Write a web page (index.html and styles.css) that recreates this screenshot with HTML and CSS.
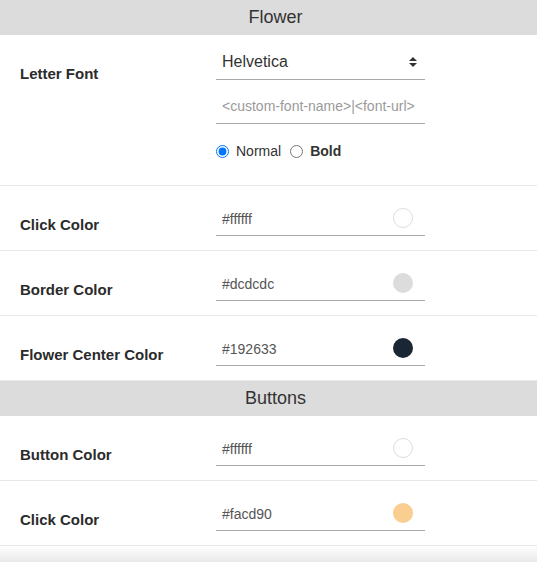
FILE: index.html
```html
<!DOCTYPE html>
<html>
<head>
<meta charset="utf-8">
<link rel="stylesheet" href="styles.css">
</head>
<body>
<div class="panel">
  <div class="section-header">Flower</div>

  <div class="row row-font">
    <div class="label">Letter Font</div>
    <div class="control">
      <div class="select-wrap">
        <select class="select">
          <option>Helvetica</option>
        </select>
        <svg class="select-arrow" width="8" height="10" viewBox="0 0 8 10"><path d="M4 0 L8 4 H0 Z M0 6 H8 L4 10 Z" fill="#333"/></svg>
      </div>
      <input class="text-input custom" type="text" placeholder="<custom-font-name>|<font-url>">
      <div class="radios">
        <label class="radio"><input type="radio" name="w" checked><span>Normal</span></label>
        <label class="radio"><input type="radio" name="w"><span class="bold">Bold</span></label>
      </div>
    </div>
  </div>

  <div class="row">
    <div class="label">Click Color</div>
    <div class="control">
      <div class="color-wrap">
        <input class="text-input" type="text" value="#ffffff">
        <span class="swatch swatch-light" style="background:#ffffff"></span>
      </div>
    </div>
  </div>

  <div class="row">
    <div class="label">Border Color</div>
    <div class="control">
      <div class="color-wrap">
        <input class="text-input" type="text" value="#dcdcdc">
        <span class="swatch" style="background:#dcdcdc"></span>
      </div>
    </div>
  </div>

  <div class="row">
    <div class="label">Flower Center Color</div>
    <div class="control">
      <div class="color-wrap">
        <input class="text-input" type="text" value="#192633">
        <span class="swatch" style="background:#192633"></span>
      </div>
    </div>
  </div>

  <div class="section-header">Buttons</div>

  <div class="row">
    <div class="label">Button Color</div>
    <div class="control">
      <div class="color-wrap">
        <input class="text-input" type="text" value="#ffffff">
        <span class="swatch swatch-light" style="background:#ffffff"></span>
      </div>
    </div>
  </div>

  <div class="row">
    <div class="label">Click Color</div>
    <div class="control">
      <div class="color-wrap">
        <input class="text-input" type="text" value="#facd90">
        <span class="swatch" style="background:#facd90"></span>
      </div>
    </div>
  </div>

  <div class="footer-shadow"></div>
</div>
</body>
</html>
```

FILE: styles.css
```css
* { box-sizing: border-box; }

html, body {
  margin: 0;
  padding: 0;
  background: #ffffff;
  font-family: "Liberation Sans", Arial, sans-serif;
  color: #333333;
}

.panel {
  width: 537px;
  display: flex;
  flex-direction: column;
}

.section-header {
  height: 35px;
  line-height: 35px;
  background: #dcdcdc;
  text-align: center;
  padding-left: 14px;
  font-size: 18px;
  color: #333333;
}

.row {
  display: grid;
  grid-template-columns: 216px 209px;
  height: 65px;
  border-bottom: 1px solid #e8e8e8;
}

.row-font {
  height: 151px;
}

.label {
  padding: 30px 0 0 20px;
  font-size: 15px;
  line-height: 17px;
  font-weight: bold;
  color: #2b2b2b;
}

.control {
  display: flex;
  flex-direction: column;
  padding-top: 16px;
}

.row-font .control {
  padding-top: 10px;
}

.select-wrap {
  position: relative;
  height: 35px;
}

.select {
  appearance: none;
  -webkit-appearance: none;
  width: 100%;
  height: 35px;
  border: none;
  border-bottom: 1px solid #a8a8a8;
  border-radius: 0;
  background: transparent;
  padding: 0 0 1px 6px;
  font-family: "Liberation Sans", Arial, sans-serif;
  font-size: 16px;
  color: #333333;
  outline: none;
}

.select-arrow {
  position: absolute;
  right: 8px;
  top: 12px;
}

.text-input {
  width: 100%;
  height: 34px;
  border: none;
  border-bottom: 1px solid #a8a8a8;
  border-radius: 0;
  background: transparent;
  padding: 0 6px;
  font-family: "Liberation Sans", Arial, sans-serif;
  font-size: 14px;
  color: #555555;
  outline: none;
}

.text-input.custom {
  margin-top: 9px;
  height: 35px;
}

.text-input::placeholder {
  color: #9a9a9a;
}

.radios {
  display: flex;
  align-items: center;
  margin-top: 19px;
  height: 16px;
  gap: 9px;
}

.radio {
  display: flex;
  align-items: center;
  gap: 7px;
  font-size: 14px;
  color: #333333;
}

.radio input {
  margin: 0;
  width: 13px;
  height: 13px;
}

.radio .bold {
  font-weight: bold;
}

.color-wrap {
  position: relative;
}

.swatch {
  position: absolute;
  right: 12px;
  top: 6px;
  width: 20px;
  height: 20px;
  border-radius: 50%;
}

.swatch-light {
  border: 1px solid #dddddd;
}

.footer-shadow {
  height: 16px;
  background: linear-gradient(#ffffff 0%, #f6f6f6 40%, #e9e9e9 100%);
}
```
